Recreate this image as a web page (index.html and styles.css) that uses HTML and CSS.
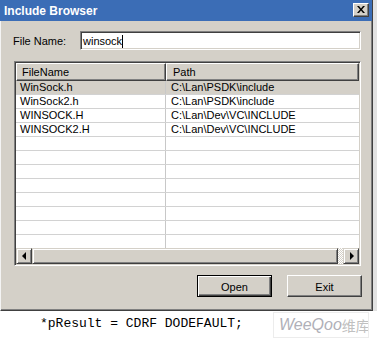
FILE: index.html
```html
<!DOCTYPE html>
<html lang="en">

<head>
    <meta charset="UTF-8">
    <title>Include Browser</title>
    <link rel="stylesheet" href="styles.css">
</head>

<body>

    <div class="desktop">
        <div class="dialog">
            <div class="titlebar">
                <span class="title">Include Browser</span>
                <div class="close">
                    <svg width="8" height="7" viewBox="0 0 8 7">
                        <path d="M0 0h2l2 2.5 2-2.5h2l-3 3.5 3 3.5h-2l-2-2.5-2 2.5h-2l3-3.5z" fill="#000"/>
                    </svg>
                </div>
            </div>

            <div class="content">
                <div class="field">
                    <label class="field-label">File Name:</label>
                    <div class="input">winsock<span class="caret"></span></div>
                </div>

                <div class="list">
                    <div class="list-head">
                        <div class="hcell col-name">FileName</div>
                        <div class="hcell col-path">Path</div>
                    </div>
                    <div class="rows" id="rows"></div>
                    <div class="hscroll">
                        <div class="sbtn"><span class="arrow arrow-left"></span></div>
                        <div class="thumb"></div>
                        <div class="track"></div>
                        <div class="sbtn"><span class="arrow arrow-right"></span></div>
                    </div>
                </div>

                <div class="buttons">
                    <div class="btn btn-default"><span>Open</span></div>
                    <div class="btn"><span>Exit</span></div>
                </div>
            </div>
        </div>
        <div class="edge"></div>
    </div>

    <div class="below">
        <span class="code">*pResult = CDRF DODEFAULT;</span>
        <div class="mark"><span class="mark-latin">WeeQoo</span><span class="mark-cjk">维库</span></div>
    </div>

    <script>
        const files = [
            ["WinSock.h", "C:\\Lan\\PSDK\\include"],
            ["WinSock2.h", "C:\\Lan\\PSDK\\include"],
            ["WINSOCK.H", "C:\\Lan\\Dev\\VC\\INCLUDE"],
            ["WINSOCK2.H", "C:\\Lan\\Dev\\VC\\INCLUDE"]
        ];

        const rows = document.getElementById('rows');
        for (let i = 0; i < 12; i++) {
            const row = document.createElement('div');
            row.classList.add('row');
            if (i === 0) row.classList.add('selected');
            const f = files[i] || ["", ""];
            row.innerHTML = `
                <span class="cell col-name">${f[0]}</span>
                <span class="cell col-path">${f[1]}</span>
            `;
            rows.appendChild(row);
        }
    </script>

</body>

</html>
```

FILE: styles.css
```css
body {
    margin: 0;
    width: 377px;
    height: 341px;
    background-color: #fff;
    font-family: 'Liberation Sans', Arial, sans-serif;
    font-size: 11px;
    color: #000;
    overflow: hidden;
}

.desktop {
    display: flex;
    height: 311px;
}

.dialog {
    width: 371px;
    height: 310px;
    background-color: #d4d0c8;
    border-left: 1px solid #f4f4f4;
    border-right: 1px solid #404040;
    border-bottom: 1px solid #404040;
    box-shadow: inset -1px -1px #808080;
    display: flex;
    flex-direction: column;
}

.edge {
    flex: 1;
    background-color: #e2e2e2;
}

.titlebar {
    height: 21px;
    background-color: #3b6db6;
    display: flex;
    align-items: center;
    justify-content: space-between;
    padding: 0 3px 0 3px;
    margin-left: -1px;
}

.title {
    color: #fff;
    font-weight: bold;
    font-size: 12px;
    padding-left: 1px;
    padding-top: 1px;
}

.close {
    width: 16px;
    height: 14px;
    box-sizing: border-box;
    background-color: #d4d0c8;
    border: 1px solid;
    border-color: #fff #404040 #404040 #fff;
    box-shadow: inset -1px -1px #808080;
    display: flex;
    align-items: center;
    justify-content: center;
    margin-top: -2px;
}

.content {
    padding: 10px 11px 0 13px;
}

.field {
    display: flex;
    align-items: center;
}

.field-label {
    width: 67px;
    margin-left: -1px;
    padding-top: 1px;
}

.input {
    flex: 1;
    height: 19px;
    box-sizing: border-box;
    background-color: #fff;
    border: 1px solid;
    border-color: #808080 #fff #fff #808080;
    box-shadow: inset 1px 1px #404040, inset -1px -1px #d4d0c8;
    padding: 2px 2px 0 2px;
    font-size: 11px;
    line-height: 14px;
}

.caret {
    display: inline-block;
    width: 1px;
    height: 13px;
    background-color: #000;
    vertical-align: -3px;
}

.list {
    margin-top: 11px;
    height: 205px;
    box-sizing: border-box;
    background-color: #fff;
    border: 1px solid;
    border-color: #808080 #fff #fff #808080;
    padding: 1px;
    box-shadow: inset 1px 1px #404040, inset -1px -1px #d4d0c8;
    display: flex;
    flex-direction: column;
}

.list-head {
    display: flex;
    height: 18px;
    flex-shrink: 0;
}

.hcell {
    box-sizing: border-box;
    background-color: #d4d0c8;
    border: 1px solid;
    border-color: #fff #404040 #404040 #fff;
    box-shadow: inset -1px -1px #808080;
    padding: 1px 0 0 5px;
    line-height: 14px;
}

.col-name {
    width: 150px;
    flex-shrink: 0;
}

.col-path {
    flex: 1;
}

.hcell.col-path {
    padding-left: 6px;
}

.rows {
    height: 167px;
    overflow: hidden;
}

.row {
    display: flex;
    height: 14px;
    box-sizing: border-box;
    border-bottom: 1px solid #d2d2d2;
    line-height: 13px;
}

.row.selected {
    background-color: #d4d0c8;
}

.cell {
    box-sizing: border-box;
    padding-left: 4px;
    white-space: nowrap;
}

.cell.col-name {
    border-right: 1px solid #c8c8c8;
}

.cell.col-path {
    padding-left: 5px;
}

.hscroll {
    display: flex;
    height: 16px;
    flex-shrink: 0;
}

.sbtn,
.thumb {
    box-sizing: border-box;
    background-color: #d4d0c8;
    border: 1px solid;
    border-color: #d4d0c8 #404040 #404040 #d4d0c8;
    box-shadow: inset 1px 1px #fff, inset -1px -1px #808080;
}

.sbtn {
    width: 16px;
    display: flex;
    align-items: center;
    justify-content: center;
}

.thumb {
    width: 306px;
}

.track {
    flex: 1;
    background-color: #e8e6e2;
    background-image: repeating-conic-gradient(#fff 0 25%, #d4d0c8 0 50%);
    background-size: 2px 2px;
}

.arrow {
    width: 0;
    height: 0;
    border-top: 4px solid transparent;
    border-bottom: 4px solid transparent;
}

.arrow-left {
    border-right: 4px solid #000;
    margin-right: 1px;
}

.arrow-right {
    border-left: 4px solid #000;
    margin-left: 1px;
}

.buttons {
    display: flex;
    justify-content: flex-end;
    gap: 15px;
    margin-top: 9px;
    margin-right: -1px;
}

.btn {
    width: 75px;
    height: 22px;
    box-sizing: border-box;
    background-color: #d4d0c8;
    border: 1px solid;
    border-color: #fff #404040 #404040 #fff;
    box-shadow: inset -1px -1px #808080;
    display: flex;
    align-items: center;
    justify-content: center;
    padding-top: 1px;
}

.btn-default {
    border: 1px solid #000;
    box-shadow: inset 1px 1px #fff, inset -1px -1px #404040, inset -2px -2px #808080;
}

.below {
    display: flex;
    align-items: flex-start;
    height: 30px;
}

.code {
    font-family: 'Liberation Mono', 'Courier New', monospace;
    font-size: 13px;
    line-height: 15px;
    margin-left: 40px;
    padding-top: 5px;
    width: 233px;
}

.mark {
    width: 96px;
    height: 26px;
    box-sizing: border-box;
    margin-top: 1px;
    border: 1px solid #ececec;
    display: flex;
    align-items: center;
    padding-left: 5px;
    white-space: nowrap;
    overflow: hidden;
    color: #b8b8b8;
}

.mark-latin {
    font-family: 'Liberation Sans', Arial, sans-serif;
    font-style: italic;
    font-size: 16px;
    color: #b0b0b8;
}

.mark-cjk {
    font-family: 'Noto Sans CJK SC', sans-serif;
    font-size: 14px;
    color: #c0c0c0;
}
```
